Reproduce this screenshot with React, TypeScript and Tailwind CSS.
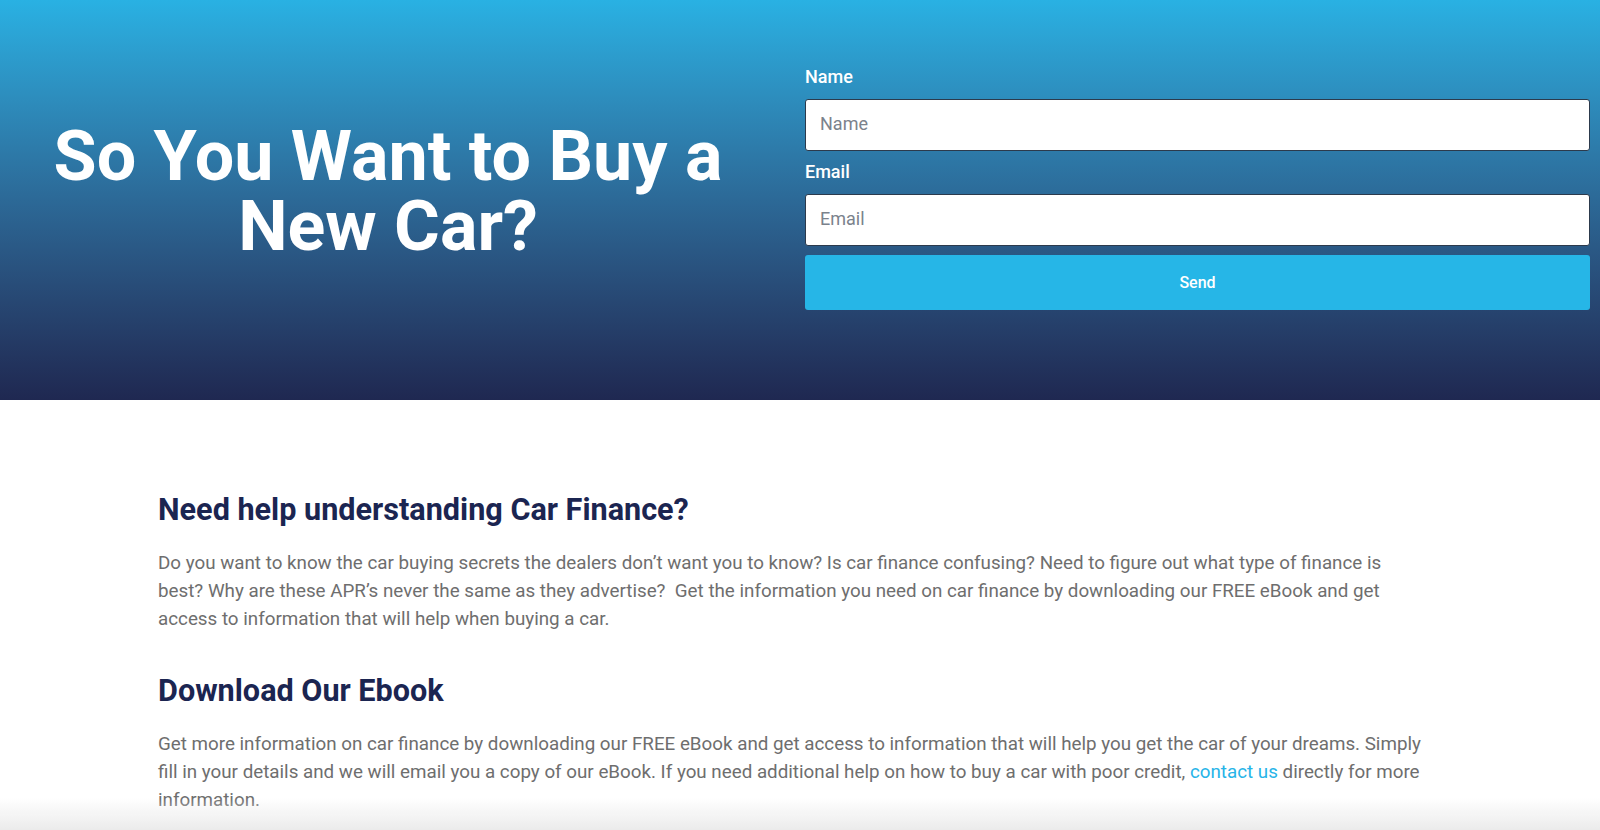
import React from 'react';

const Field: React.FC<{ label: string; type: string }> = ({ label, type }) => (
  <div>
    <label className="block text-[18px] leading-[22px] font-medium text-white mb-[11px]">{label}</label>
    <input
      type={type}
      placeholder={label}
      className="block w-full h-[52px] bg-white border border-[#2c3a4c] rounded-[3px] px-[14px] pb-[3px] text-[18px] text-[#333] placeholder:text-[#7b828c] outline-none"
    />
  </div>
);

const App: React.FC = () => {
  return (
    <div className="min-h-screen bg-white font-['Roboto',sans-serif]">
      {/* Hero */}
      <section className="h-[400px] flex bg-gradient-to-b from-[#29b1e3] to-[#1f2851]">
        <div className="w-[776px] pt-[121px] text-center">
          <h1 className="text-[70px] leading-[70px] font-bold text-white">
            So You Want to Buy a<br />New Car?
          </h1>
        </div>
        <form className="w-[785px] ml-[29px] pt-[66px] flex flex-col" onSubmit={e => e.preventDefault()}>
          <Field label="Name" type="text" />
          <div className="mt-[10px]">
            <Field label="Email" type="email" />
          </div>
          <button
            type="submit"
            className="mt-[9px] h-[55px] w-full bg-[#26b6e7] rounded-[3px] text-white text-[16px] font-medium"
          >
            Send
          </button>
        </form>
      </section>

      {/* Content */}
      <main className="pt-[92px] pl-[158px] w-[1428px]">
        <h2 className="text-[30.6px] leading-[36px] font-bold text-[#1b2551] mb-[21px]">Need help understanding Car Finance?</h2>
        <p className="text-[18.8px] leading-[28px] text-[#6e6e6e] mb-[40px]">
          Do you want to know the car buying secrets the dealers don’t want you to know? Is car finance confusing? Need to figure out what type of finance is best? Why are these APR’s never the same as they advertise?{'\u00a0'} Get the information you need on car finance by downloading our FREE eBook and get access to information that will help when buying a car.
        </p>

        <h2 className="text-[30.6px] leading-[36px] font-bold text-[#1b2551] mb-[21px]">Download Our Ebook</h2>
        <p className="text-[18.8px] leading-[28px] text-[#6e6e6e]">
          Get more information on car finance by downloading our FREE eBook and get access to information that will help you get the car of your dreams. Simply fill in your details and we will email you a copy of our eBook. If you need additional help on how to buy a car with poor credit,{' '}
          <a href="#" className="text-[#27b4e8]">contact us</a> directly for more information.
        </p>
      </main>

      {/* bottom fade */}
      <div className="fixed bottom-0 left-0 right-0 h-[32px] pointer-events-none bg-gradient-to-b from-white/0 to-[#ebebeb]" />
    </div>
  );
};

export default App;
